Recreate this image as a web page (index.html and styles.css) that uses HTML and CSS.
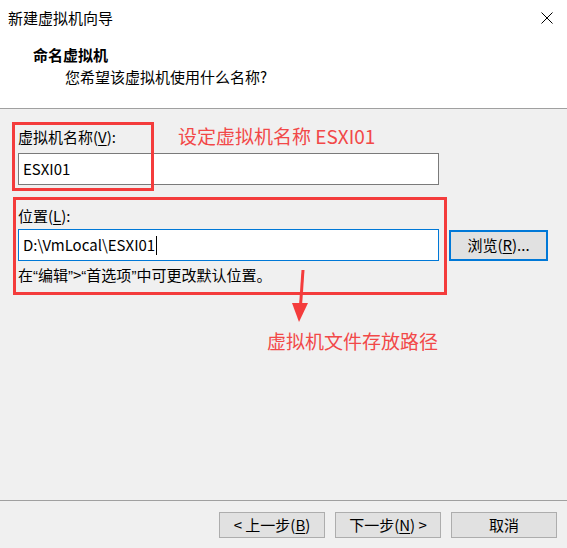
FILE: index.html
```html
<!DOCTYPE html>
<html lang="zh-CN">
<head>
<meta charset="utf-8">
<title>新建虚拟机向导</title>
<link rel="stylesheet" href="styles.css">
</head>
<body>
<div class="dialog">
  <header class="header">
    <div class="titlebar">
      <span class="title">新建虚拟机向导</span>
      <svg class="close" width="12" height="12" viewBox="0 0 12 12"><path d="M0.5 0.5 L11.5 11.5 M11.5 0.5 L0.5 11.5" stroke="#000" stroke-width="1" fill="none"/></svg>
    </div>
    <div class="heading">命名虚拟机</div>
    <div class="subheading">您希望该虚拟机使用什么名称?</div>
  </header>
  <main class="content">
    <label class="label">虚拟机名称(<u>V</u>):</label>
    <div class="input name-input">ESXI01</div>
    <label class="label loc-label">位置(<u>L</u>):</label>
    <div class="loc-row">
      <div class="input focused">D:\VmLocal\ESXI01<span class="caret"></span></div>
      <button class="btn browse">浏览(<u>R</u>)...</button>
    </div>
    <div class="hint">在<span class="q">“</span>编辑<span class="q">”</span>&gt;<span class="q">“</span>首选项<span class="q">”</span>中可更改默认位置。</div>

    <div class="mark mark-name"></div>
    <div class="mark mark-loc"></div>
    <div class="note note-name">设定虚拟机名称 ESXI01</div>
    <svg class="arrow" width="30" height="60" viewBox="0 0 30 60"><path d="M19 0 L16.5 36" stroke="#f43c3c" stroke-width="3" fill="none"/><path d="M8 33 L24 33 L15 52 Z" fill="#f43c3c"/></svg>
    <div class="note note-loc">虚拟机文件存放路径</div>
  </main>
  <footer class="footer">
    <button class="btn">&lt; 上一步(<u>B</u>)</button>
    <button class="btn">下一步(<u>N</u>) &gt;</button>
    <button class="btn">取消</button>
  </footer>
</div>
</body>
</html>
```
FILE: styles.css
```css
* { box-sizing: border-box; }
html, body {
  margin: 0;
  padding: 0;
}
body {
  width: 567px;
  height: 548px;
  background: #f0f0f0;
  font-family: "Noto Sans CJK SC", "Noto Sans", sans-serif;
  font-size: 15px;
  line-height: 20px;
  color: #000;
  overflow: hidden;
}
.dialog {
  display: flex;
  flex-direction: column;
  height: 548px;
}
.header {
  height: 109px;
  background: #fff;
  border-bottom: 1px solid #a0a0a0;
  padding-top: 8px;
}
.titlebar {
  display: flex;
  justify-content: space-between;
  align-items: center;
  padding: 0 14px 0 8px;
}
.close { display: block; }
.heading {
  font-weight: bold;
  margin: 17px 0 0 33px;
}
.subheading {
  margin: 2px 0 0 65px;
}
.content {
  flex: 1;
  position: relative;
  padding: 18px 0 0 18px;
}
.label { display: block; }
u { text-decoration: underline; text-underline-offset: 2px; }
.input {
  width: 421px;
  height: 32px;
  background: #fff;
  border: 1px solid #7a7a7a;
  padding: 0 4px;
  display: flex;
  align-items: center;
}
.name-input { margin-top: 6px; }
.loc-label { margin-top: 21px; }
.loc-row {
  display: flex;
  align-items: center;
  gap: 10px;
  margin-top: 3px;
}
.focused { border-color: #0078d7; }
.caret {
  display: inline-block;
  width: 1px;
  height: 19px;
  background: #000;
  margin-left: 1px;
}
.hint { margin-top: 4px; }
.q { font-family: "Liberation Sans", sans-serif; }
.btn {
  font-family: inherit;
  font-size: 15px;
  line-height: 20px;
  color: #000;
  background: #e1e1e1;
  border: 1px solid #adadad;
  padding: 0;
  width: 106px;
  height: 26px;
}
.browse {
  width: 99px;
  height: 31px;
  border: 2px solid #0078d7;
}
.footer {
  height: 48px;
  border-top: 1px solid #a0a0a0;
  display: flex;
  justify-content: flex-end;
  gap: 10px;
  padding: 11px 10px 10px 0;
}
.mark {
  position: absolute;
  border: 3px solid #f43c3c;
}
.mark-name { left: 12px; top: 13px; width: 142px; height: 69px; }
.mark-loc { left: 13px; top: 88px; width: 434px; height: 98px; }
.note {
  position: absolute;
  color: #f24848;
  font-size: 19px;
  line-height: 24px;
  white-space: nowrap;
}
.note-name { left: 178px; top: 15px; }
.note-loc { left: 267px; top: 220px; }
.arrow {
  position: absolute;
  left: 284px;
  top: 161px;
}
```
